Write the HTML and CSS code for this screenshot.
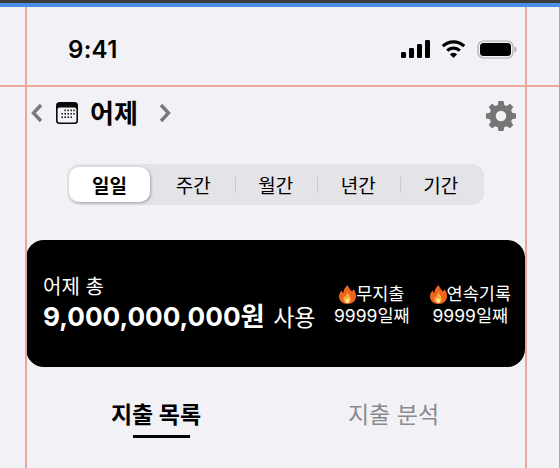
FILE: index.html
```html
<!DOCTYPE html>
<html lang="ko">
<head>
    <meta charset="UTF-8">
    <meta name="viewport" content="width=device-width, initial-scale=1.0">
    <title>지출</title>
    <link rel="stylesheet" href="styles.css">
</head>
<body>
    <div class="top-bar"></div>
    <div class="guide guide-left"></div>
    <div class="guide guide-right"></div>
    <div class="guide guide-top"></div>
    <div class="guide-edge"></div>

    <div class="status-bar">
        <span class="time">9:41</span>
        <div class="status-icons">
            <svg width="29" height="18" viewBox="0 0 29 18"><rect x="0" y="12" width="5" height="6" rx="1.2"/><rect x="8" y="8" width="5" height="10" rx="1.2"/><rect x="16" y="4" width="5" height="14" rx="1.2"/><rect x="24" y="0" width="5" height="18" rx="1.2"/></svg>
            <svg width="25" height="18" viewBox="0 0 25 18"><path d="M12.500 18 8.800 14.200a5.300 5.300 0 0 1 7.400 0Z"/><path d="M6.200 10.700a9 9 0 0 1 12.600 0" fill="none" stroke="#000" stroke-width="3.2"/><path d="M1.800 6.200a15.500 15.500 0 0 1 21.400 0" fill="none" stroke="#000" stroke-width="3.2"/></svg>
            <svg width="40" height="19" viewBox="0 0 40 19"><rect x="1" y="1" width="35" height="17" rx="5.5" fill="none" stroke="#a9a9ad" stroke-width="1.2"/><rect x="3" y="3" width="31" height="13" rx="3.500"/><path d="M37.500 6.500c1.400.4 2 1.600 2 3s-.6 2.600-2 3Z" fill="#a9a9ad"/></svg>
        </div>
    </div>

    <header class="date-nav">
        <div class="date-left">
            <svg class="chevron" width="12" height="20" viewBox="0 0 12 20"><path d="M10 2 2.500 10l7.500 8" fill="none" stroke="#7a7a7a" stroke-width="3.4"/></svg>
            <svg class="calendar" width="22" height="22" viewBox="0 0 22 22">
                <rect x="0" y="0" width="22" height="22" rx="3.5" fill="#0a0a0a"/>
                <rect x="1.6" y="5.4" width="18.8" height="15" rx="2" fill="#f4f4f8"/>
                <g fill="#222">
                    <rect x="8.4" y="7.6" width="1.6" height="1.6"/><rect x="11.4" y="7.6" width="1.6" height="1.6"/><rect x="14.4" y="7.6" width="1.6" height="1.6"/><rect x="17.2" y="7.6" width="1.6" height="1.6"/>
                    <rect x="5.4" y="11" width="1.6" height="1.6"/><rect x="8.4" y="11" width="1.6" height="1.6"/><rect x="11.4" y="11" width="1.6" height="1.6"/><rect x="14.4" y="11" width="1.6" height="1.6"/><rect x="17.2" y="11" width="1.6" height="1.6"/>
                    <rect x="5.4" y="14.4" width="1.6" height="1.6"/><rect x="8.4" y="14.4" width="1.6" height="1.6"/><rect x="11.4" y="14.4" width="1.6" height="1.6"/><rect x="14.4" y="14.4" width="1.6" height="1.6"/>
                </g>
            </svg>
            <h1 class="date-title">어제</h1>
            <svg class="chevron chevron-next" width="12" height="20" viewBox="0 0 12 20"><path d="M2 2l7.500 8L2 18" fill="none" stroke="#7a7a7a" stroke-width="3.4"/></svg>
        </div>
        <svg class="gear" width="30" height="30" viewBox="0 0 24 24"><path fill="#757575" fill-rule="evenodd" d="M10 0h4l.6 3.100 2 .8L19.200 2.200l2.600 2.600-1.700 2.600.8 2 3.100.6v4l-3.100.6-.8 2 1.700 2.600-2.600 2.600-2.600-1.700-2 .8L14 24h-4l-.6-3.100-2-.8-2.600 1.700-2.600-2.600 1.700-2.600-.8-2L0 14v-4l3.100-.6.8-2L2.200 4.800l2.600-2.600 2.600 1.700 2-.8ZM12 7.800a4.200 4.200 0 1 0 0 8.400 4.200 4.200 0 0 0 0-8.400Z"/></svg>
    </header>

    <nav class="segment">
        <span class="seg-item seg-active">일일</span>
        <span class="seg-item">주간</span>
        <span class="seg-item seg-line">월간</span>
        <span class="seg-item seg-line">년간</span>
        <span class="seg-item seg-line">기간</span>
    </nav>

    <section class="summary">
        <div class="summary-total">
            <div class="summary-label">어제 총</div>
            <div class="summary-amount"><strong>9,000,000,000원</strong> 사용</div>
        </div>
        <div class="stat stat-first">
            <div class="stat-title"><svg class="flame" width="17" height="19" viewBox="0 0 17 19"><path fill="#f0651c" d="M8.800 0c.6 3 2.300 4.300 4 6.300 1.100-.4 1.500-1.300 1.500-2.300C16 6 17 8.500 17 11c0 4.800-3.500 8-8.500 8S0 15.800 0 11.500C0 8.500 1.500 6.800 2.800 5.300c.1 1.300.5 2.200 1.500 2.700C4.500 4.800 6 2 8.800 0Z"/><path fill="#fbb03b" d="M8.800 7.500c.3 2 2.900 3.300 2.900 6.500a3.300 3.300 0 0 1-3.300 4c-2.400 0-4-1.600-4-3.900 0-1.500.8-2.600 1.700-3.400.2.800.5 1.200 1 1.400-.1-1.800.4-3.400 1.700-4.600Z"/><path fill="#fde6a8" d="M8.500 13c.9.900 1.500 1.600 1.500 2.800A1.700 1.700 0 0 1 8.300 18c-1.200 0-1.900-.9-1.900-2 0-1.200 1.300-1.800 2.100-3Z"/></svg>무지출</div>
            <div class="stat-value">9999일째</div>
        </div>
        <div class="stat">
            <div class="stat-title"><svg class="flame" width="17" height="19" viewBox="0 0 17 19"><path fill="#f0651c" d="M8.800 0c.6 3 2.300 4.300 4 6.300 1.100-.4 1.500-1.300 1.500-2.300C16 6 17 8.500 17 11c0 4.800-3.500 8-8.500 8S0 15.800 0 11.500C0 8.500 1.500 6.800 2.800 5.300c.1 1.300.5 2.200 1.500 2.700C4.500 4.800 6 2 8.800 0Z"/><path fill="#fbb03b" d="M8.800 7.500c.3 2 2.900 3.300 2.900 6.500a3.300 3.300 0 0 1-3.300 4c-2.400 0-4-1.600-4-3.900 0-1.500.8-2.600 1.700-3.400.2.800.5 1.200 1 1.400-.1-1.800.4-3.400 1.700-4.600Z"/><path fill="#fde6a8" d="M8.500 13c.9.900 1.500 1.600 1.500 2.800A1.700 1.700 0 0 1 8.300 18c-1.200 0-1.900-.9-1.900-2 0-1.200 1.300-1.800 2.100-3Z"/></svg>연속기록</div>
            <div class="stat-value">9999일째</div>
        </div>
    </section>

    <div class="tabs">
        <div class="tab tab-active"><span>지출 목록</span></div>
        <div class="tab"><span>지출 분석</span></div>
    </div>
</body>
</html>
```

FILE: styles.css
```css
/* Pantalla de gastos */
html, body {
    margin: 0;
    padding: 0;
}
body {
    position: relative;
    width: 560px;
    height: 468px;
    overflow: hidden;
    background-color: #f1f1f6;
    color: #000;
    font-family: Inter, "Noto Sans CJK KR", sans-serif;
}

/* Marco del editor */
.top-bar {
    height: 3px;
    border-bottom: 4px solid #4a90ea;
    background-color: #3c3c3c;
}
.guide {
    position: absolute;
    background-color: #eaa89b;
}
.guide-left {
    left: 25px;
    top: 7px;
    bottom: 0;
    width: 2px;
}
.guide-right {
    left: 525px;
    top: 7px;
    bottom: 0;
    width: 2px;
}
.guide-top {
    left: 0;
    top: 85px;
    width: 559px;
    height: 2px;
}
.guide-edge {
    position: absolute;
    right: 0;
    top: 7px;
    bottom: 0;
    width: 1px;
    background-color: #7fb2ee;
}

/* Barra de estado */
.status-bar {
    display: flex;
    align-items: center;
    justify-content: space-between;
    height: 84px;
    padding: 0 43px 0 68px;
}
.time {
    font-size: 24px;
    font-weight: 600;
    letter-spacing: 0.3px;
}
.status-icons {
    display: flex;
    align-items: center;
    gap: 11px;
}

/* Fecha */
.date-nav {
    display: flex;
    align-items: flex-start;
    justify-content: space-between;
    height: 73px;
    padding: 10px 44px 0 31px;
    box-sizing: border-box;
}
.date-left {
    display: flex;
    align-items: center;
    height: 24px;
}
.calendar {
    margin-left: 13px;
}
.date-title {
    margin: 0 0 3px 12px;
    font-size: 26px;
    font-weight: 700;
}
.chevron-next {
    margin-left: 21px;
}

/* Selector de periodo */
.segment {
    display: grid;
    grid-template-columns: 83px repeat(4, 82.5px);
    align-items: center;
    width: 417px;
    height: 41px;
    margin-left: 67px;
    padding: 0 0 0 2px;
    box-sizing: border-box;
    border-radius: 12px;
    background-color: #e3e3e8;
}
.seg-item {
    position: relative;
    display: flex;
    align-items: center;
    justify-content: center;
    height: 35px;
    font-size: 19px;
}
.seg-active {
    width: 81px;
    border-radius: 10px;
    background-color: #fff;
    box-shadow: 1px 1px 3px rgba(0, 0, 0, 0.3);
    font-weight: 700;
}
.seg-line::before {
    content: "";
    position: absolute;
    left: 0;
    top: 10px;
    width: 1px;
    height: 16px;
    background-color: #cbcbcf;
}

/* Resumen */
.summary {
    display: flex;
    align-items: center;
    width: 499px;
    height: 127px;
    margin: 35px 0 0 26px;
    padding: 0 14px 0 17px;
    box-sizing: border-box;
    border-radius: 18px;
    background-color: #000;
    color: #fff;
}
.summary-total {
    flex: 1;
    margin-top: 4px;
}
.summary-label {
    font-size: 20px;
    line-height: 24px;
}
.summary-amount {
    font-size: 23px;
    line-height: 36px;
    white-space: nowrap;
}
.summary-amount strong {
    margin-right: 2px;
    font-size: 26.2px;
    font-weight: 700;
}
.stat {
    display: flex;
    flex-direction: column;
    align-items: center;
    margin-top: 3px;
    font-size: 17.5px;
    line-height: 22px;
    white-space: nowrap;
}
.stat-first {
    margin-right: 20px;
}
.stat-title {
    display: flex;
    align-items: center;
}
.flame {
    flex: none;
}

/* Pestañas */
.tabs {
    display: grid;
    grid-template-columns: 270px 205px;
    margin: 30px 0 0 21px;
}
.tab {
    display: flex;
    justify-content: center;
    color: #8a8a8e;
    font-size: 23px;
    line-height: 36px;
}
.tab span {
    position: relative;
}
.tab-active {
    color: #000;
    font-weight: 700;
}
.tab-active span::after {
    content: "";
    position: absolute;
    left: 22px;
    right: 11px;
    top: 38px;
    height: 3px;
    background-color: #000;
}
```
